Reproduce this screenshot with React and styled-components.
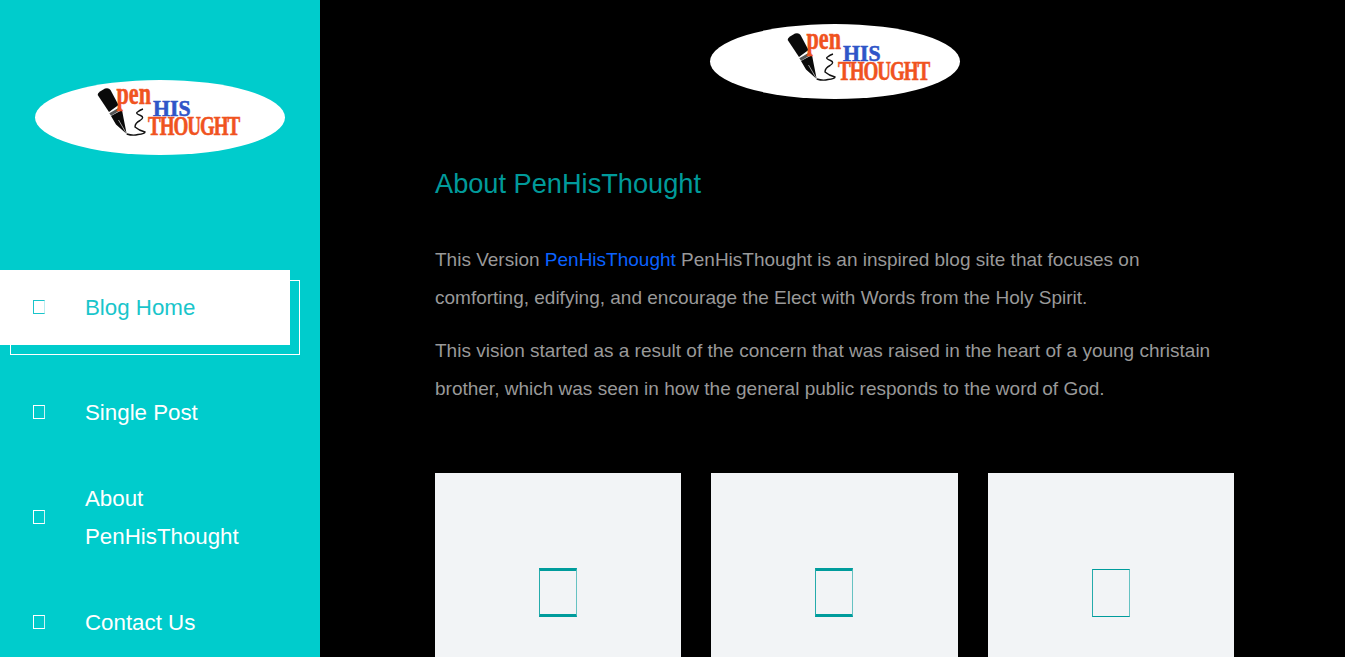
import React from "react";
import styled, { createGlobalStyle } from "styled-components";

const Global = createGlobalStyle`
  html, body { margin: 0; padding: 0; height: 100%; overflow: hidden; background: #000; }
  body { font-family: "Liberation Sans", Arial, sans-serif; }
  *, *::before, *::after { box-sizing: border-box; }
`;

const Page = styled.div`
  display: flex;
  width: 1345px;
  height: 657px;
  overflow: hidden;
  background: #000;
`;

const Sidebar = styled.aside`
  flex: 0 0 320px;
  height: 657px;
  overflow: hidden;
  background: #00cccc;
  padding-top: 80px;
`;

const SideLogo = styled.div`
  display: flex;
  padding-left: 35px;
  height: 190px;
`;

const Nav = styled.ul`
  list-style: none;
  margin: 0;
  padding: 0;
  display: flex;
  flex-direction: column;
  gap: 30px;
`;

const NavItem = styled.li`
  position: relative;
  display: flex;
  align-items: center;
  width: 290px;
  height: 75px;
  padding-left: 33px;
  color: ${(p) => (p.$active ? "#19c5cb" : "#fff")};
  font-size: 22.3px;
  line-height: 38px;

  ${(p) =>
    p.$active &&
    `&::after {
      content: "";
      position: absolute;
      left: 10px;
      top: 10px;
      width: 290px;
      height: 75px;
      border: 1px solid #fff;
      z-index: 0;
    }
    &::before {
      content: "";
      position: absolute;
      inset: 0;
      background: #fff;
      z-index: 1;
    }`}
`;

const NavIcon = styled.span`
  position: relative;
  z-index: 2;
  flex: 0 0 12px;
  width: 12px;
  height: 14px;
  margin-top: -1px;
  border: 1px solid currentColor;
  border-right-color: ${(p) => (p.$active ? "#bdeef0" : "#cdf3f3")};
  margin-right: 40px;
`;

const NavLabel = styled.span`
  position: relative;
  z-index: 2;
  white-space: pre-line;
`;

const Main = styled.main`
  flex: 1;
  min-width: 0;
  padding: 24px 111px 0 115px;
  display: flex;
  flex-direction: column;
`;

const TopLogo = styled.div`
  display: flex;
  justify-content: center;
  padding-left: 1px;
  margin-bottom: 65px;
`;

const Heading = styled.h2`
  margin: 0 0 37px;
  font-weight: 400;
  font-size: 27.2px;
  line-height: 40px;
  color: #009a9a;
`;

const Para = styled.p`
  margin: 0 0 15px;
  font-size: 19px;
  line-height: 38px;
  color: #999;
`;

const TextLink = styled.a`
  color: #0a62ff;
  text-decoration: none;
`;

const Cards = styled.div`
  display: grid;
  grid-template-columns: repeat(3, 1fr);
  column-gap: 30px;
  margin-top: 50px;
  width: 799px;
`;

const Card = styled.div`
  height: 260px;
  background: #f2f4f6;
  display: flex;
  justify-content: center;
  padding-top: ${(p) => (p.$thin ? "96px" : "95px")};
`;

const CardIcon = styled.span`
  width: 38px;
  height: ${(p) => (p.$thin ? "48px" : "49px")};
  border-style: solid;
  border-color: #009c9c;
  border-left-color: #25abab;
  border-right-color: #66c2c2;
  border-width: ${(p) => (p.$thin ? "1px" : "3px 1px")};
`;

const LogoSvg = styled.svg`
  display: block;
  flex: none;
  overflow: visible;
`;

const LogoText = styled.text`
  font-family: "Liberation Serif", serif;
  font-weight: 700;
  stroke-width: 0.6px;
`;

function Logo({ dx = 0, dy = 0 }) {
  return (
    <LogoSvg width="250" height="75" viewBox="0 0 250 75" role="img" aria-label="PenHisThought logo">
      <ellipse cx="125" cy="37.5" rx="125" ry="37.5" fill="#fff" />
      <g transform={`translate(${dx} ${dy})`}>
        <path d="M62.7 15 Q62.5 13 65 11.5 L70 8.5 Q74 7.5 75.5 10 L83.5 25 L74 32 Z" fill="#0a0a0a" />
        <path d="M74.3 33.3 L85.5 26.7 L86.7 29.6 L76 35.7 Z" fill="#555" />
        <path d="M76 36 L87 30 L88.5 38 L91.7 54 L81 44.5 Z" fill="#0a0a0a" />
        <path d="M91.7 54 L83.5 40" stroke="#fff" strokeWidth="0.6" fill="none" />
        <path d="M91.7 54 Q98 56 103 54.5 Q110 54 110 52 Q104 50.5 100 47 Q100 43 105 40.5 Q110 37.5 105.5 35.5 Q100 33.5 102.5 32 Q105 30 108 29" fill="none" stroke="#111" strokeWidth="1.4" />
        <LogoText x="81.5" y="24" fontSize="32" textLength="34.5" lengthAdjust="spacingAndGlyphs" fill="#f0531f" stroke="#f0531f">pen</LogoText>
        <LogoText x="118" y="35.5" fontSize="24" textLength="37.5" lengthAdjust="spacingAndGlyphs" fill="#2f55c8" stroke="#2f55c8">HIS</LogoText>
        <LogoText transform="translate(113 54.5) scale(.72 1)" x="0" y="0" fontSize="26.5" textLength="128" lengthAdjust="spacing" fill="#f0531f" stroke="#f0531f">THOUGHT</LogoText>
      </g>
    </LogoSvg>
  );
}

const items = [
  { label: "Blog Home", active: true },
  { label: "Single Post" },
  { label: "About\nPenHisThought" },
  { label: "Contact Us" },
];

export default function App() {
  return (
    <Page>
      <Global />
      <Sidebar>
        <SideLogo><Logo /></SideLogo>
        <Nav>
          {items.map((it) => (
            <NavItem key={it.label} $active={it.active}>
              <NavIcon $active={it.active} />
              <NavLabel>{it.label}</NavLabel>
            </NavItem>
          ))}
        </Nav>
      </Sidebar>
      <Main>
        <TopLogo><Logo dx={15} dy={1} /></TopLogo>
        <Heading>About PenHisThought</Heading>
        <Para>
          This Version <TextLink href="#">PenHisThought</TextLink> PenHisThought is an inspired blog site that focuses on comforting, edifying, and encourage the Elect with Words from the Holy Spirit.
        </Para>
        <Para>
          This vision started as a result of the concern that was raised in the heart of a young christain brother, which was seen in how the general public responds to the word of God.
        </Para>
        <Cards>
          <Card><CardIcon /></Card>
          <Card><CardIcon /></Card>
          <Card $thin><CardIcon $thin /></Card>
        </Cards>
      </Main>
    </Page>
  );
}
